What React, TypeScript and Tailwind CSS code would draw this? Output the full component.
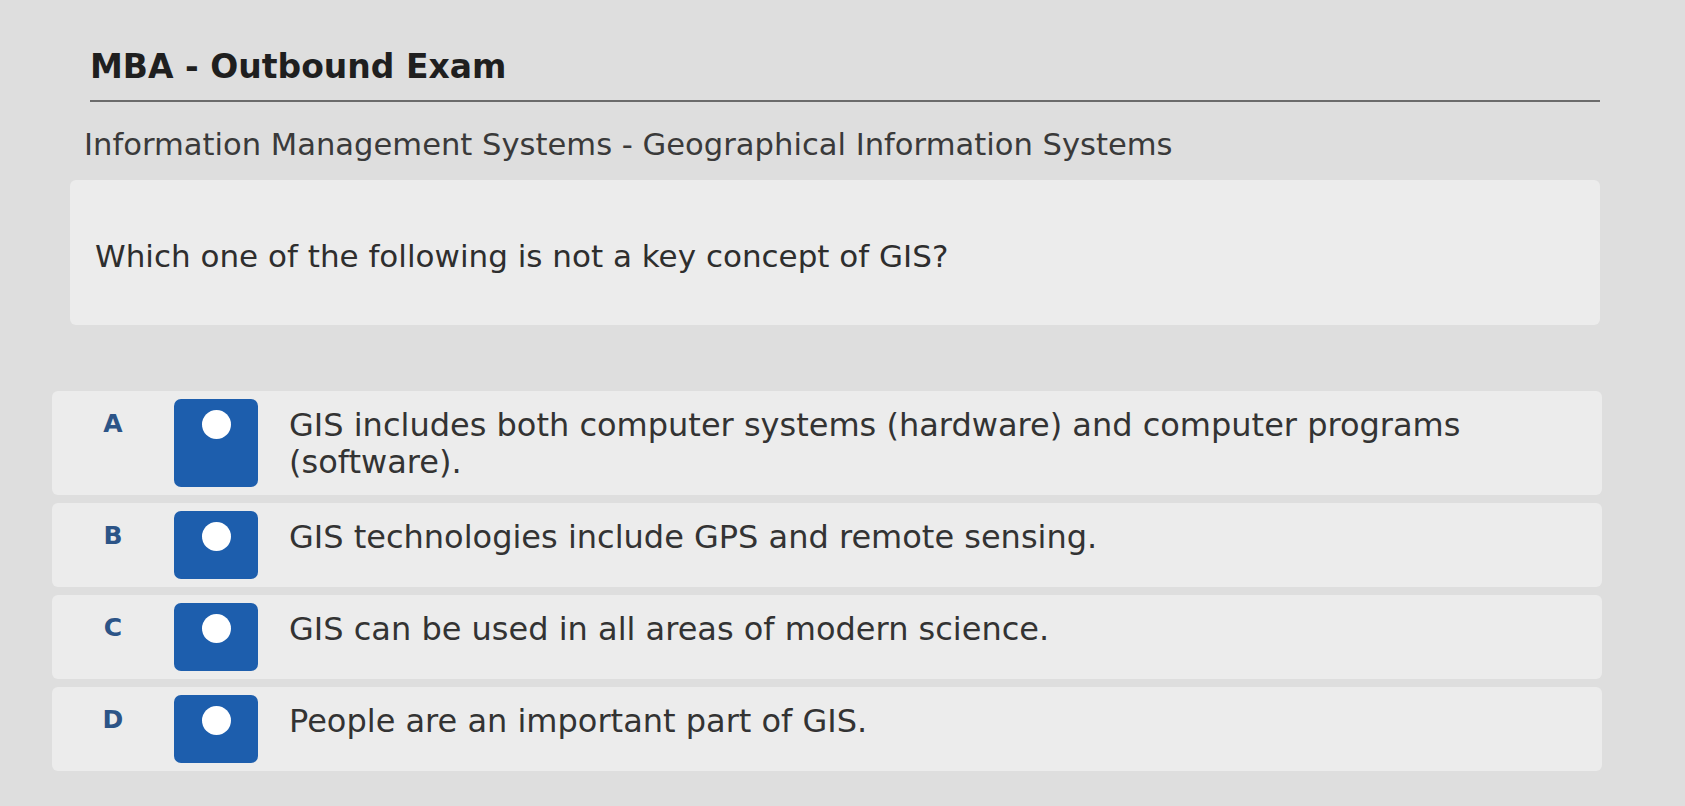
const options = [
  { letter: 'A', text: 'GIS includes both computer systems (hardware) and computer programs (software).' },
  { letter: 'B', text: 'GIS technologies include GPS and remote sensing.' },
  { letter: 'C', text: 'GIS can be used in all areas of modern science.' },
  { letter: 'D', text: 'People are an important part of GIS.' },
];

export default function App() {
  return (
    <div className="min-h-screen w-full bg-[#dedede] text-[#2d2d2d] font-['DejaVu_Sans',Verdana,sans-serif] overflow-hidden">
      <div className="w-[1530px] ml-[70px] pt-[50px]">
        <h1 className="ml-[20px] text-[33px] font-bold text-[#1f1f1f] leading-none pb-[17px] border-b-2 border-[#6b6b6b]">
          MBA - Outbound Exam
        </h1>
        <h2 className="ml-[14px] mt-[25px] text-[30.6px] text-[#3a3a3a] leading-[36px]">
          Information Management Systems - Geographical Information Systems
        </h2>
        <div className="mt-[17px] h-[145px] rounded-[6px] bg-[#ececec] flex items-center px-[25px]">
          <p className="text-[31px] text-[#2e2e2e] pt-[8px]">Which one of the following is not a key concept of GIS?</p>
        </div>
        <div className="mt-[66px] flex flex-col gap-[8px] -ml-[18px] w-[1550px]">
          {options.map((o) => (
            <div key={o.letter} className="rounded-[6px] bg-[#ececec] flex items-stretch py-[8px]">
              <div className="w-[122px] shrink-0 flex items-start justify-center pt-[10px]">
                <span className="text-[25px] font-bold text-[#2c5487] leading-[30px]">{o.letter}</span>
              </div>
              <div className="w-[84px] min-h-[68px] shrink-0 rounded-[7px] bg-[#1d5ead] flex justify-center pt-[11px]">
                <span className="w-[29px] h-[29px] rounded-full bg-white" />
              </div>
              <p className="ml-[31px] pt-[8px] pb-[6px] pr-[90px] text-[32px] leading-[37px] text-[#333]">{o.text}</p>
            </div>
          ))}
        </div>
      </div>
    </div>
  );
}
